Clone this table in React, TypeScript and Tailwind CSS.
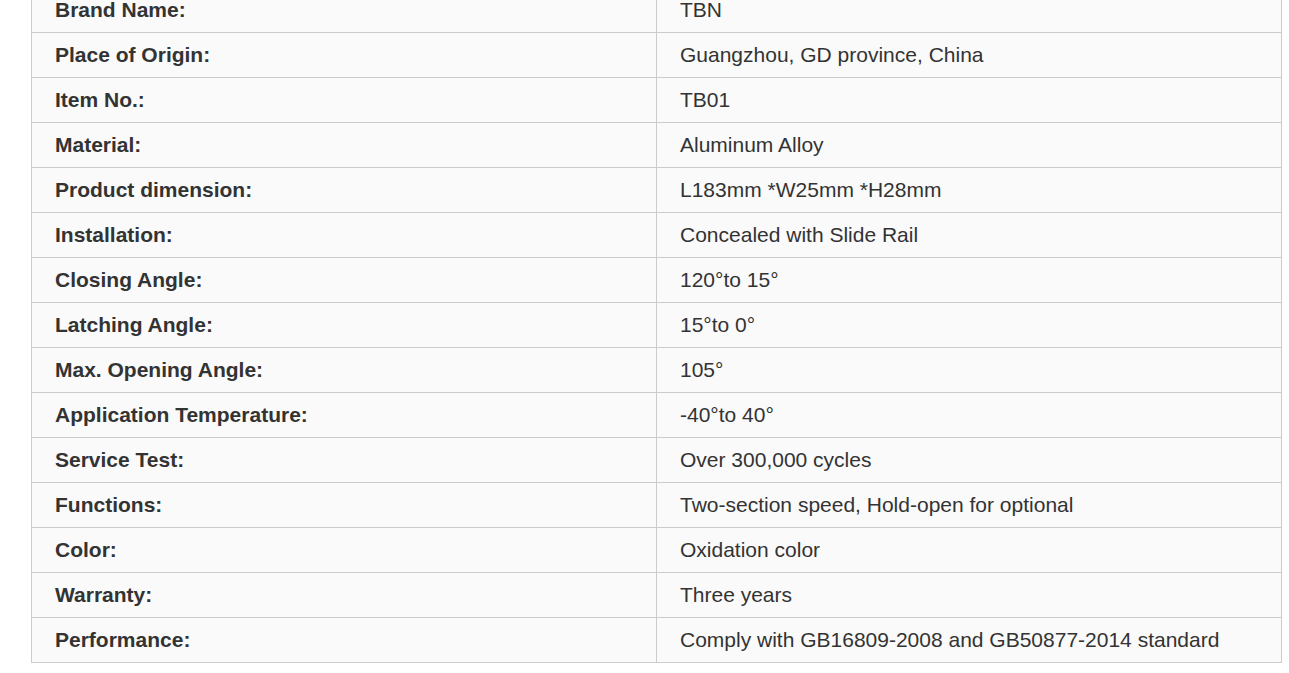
import React from "react";

const rows: [string, string][] = [
  ["Brand Name:", "TBN"],
  ["Place of Origin:", "Guangzhou, GD province, China"],
  ["Item No.:", "TB01"],
  ["Material:", "Aluminum Alloy"],
  ["Product dimension:", "L183mm *W25mm *H28mm"],
  ["Installation:", "Concealed with Slide Rail"],
  ["Closing Angle:", "120°to 15°"],
  ["Latching Angle:", "15°to 0°"],
  ["Max. Opening Angle:", "105°"],
  ["Application Temperature:", "-40°to 40°"],
  ["Service Test:", "Over 300,000 cycles"],
  ["Functions:", "Two-section speed, Hold-open for optional"],
  ["Color:", "Oxidation color"],
  ["Warranty:", "Three years"],
  ["Performance:", "Comply with GB16809-2008 and GB50877-2014 standard"],
];

export default function App() {
  return (
    <div
      className="w-[1289px] h-[673px] overflow-hidden bg-white text-[#333333]"
      style={{ fontFamily: '"Liberation Sans", Arial, sans-serif' }}
    >
      <div className="mt-[-13px] ml-[31px] w-[1251px] border-l border-r border-b border-[#cccccc] bg-[#fafafa]">
        {rows.map(([k, v]) => (
          <div key={k} className="flex h-[45px] box-border border-t border-[#cccccc]">
            <div className="w-[625px] box-border border-r border-[#cccccc] pl-[23px] flex items-center text-[21px] font-bold leading-[22px]">
              {k}
            </div>
            <div className="flex-1 pl-[23px] flex items-center text-[21px] leading-[22px]">
              {v}
            </div>
          </div>
        ))}
      </div>
    </div>
  );
}
